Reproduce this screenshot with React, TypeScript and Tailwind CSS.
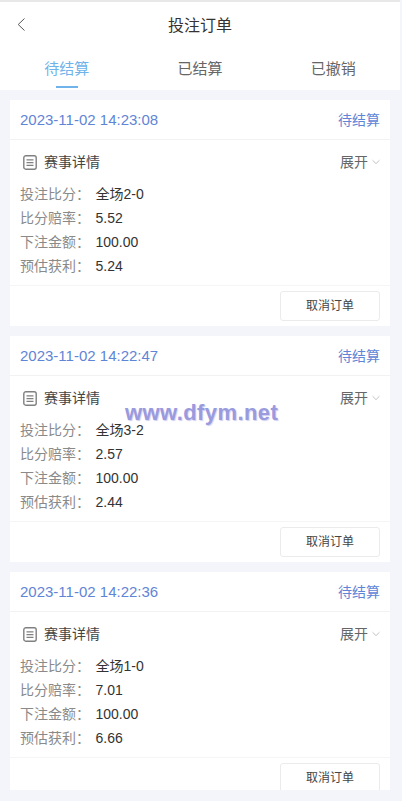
const orders = [
  { time: "2023-11-02 14:23:08", score: "全场2-0", odds: "5.52", amount: "100.00", profit: "5.24" },
  { time: "2023-11-02 14:22:47", score: "全场3-2", odds: "2.57", amount: "100.00", profit: "2.44" },
  { time: "2023-11-02 14:22:36", score: "全场1-0", odds: "7.01", amount: "100.00", profit: "6.66" },
];

const tabs = ["待结算", "已结算", "已撤销"];

function OrderRow({ label, value }: { label: string; value: string }) {
  return (
    <div className="flex h-6 items-center text-[14px]">
      <span className="w-[75.5px] text-[#8a8a8a]">{label}：</span>
      <span className="text-[#333333]">{value}</span>
    </div>
  );
}

function OrderCard({ order }: { order: (typeof orders)[number] }) {
  return (
    <div className="mb-2.5 shrink-0 bg-white">
      <div className="flex h-10 items-center justify-between border-b border-[#f2f2f2] px-2.5 pt-[2px]">
        <span className="text-[15px] text-[#5f85d6]">{order.time}</span>
        <span className="text-[14px] text-[#5f85d6]">待结算</span>
      </div>
      <div className="flex h-[42px] items-center justify-between pl-[13px] pr-2.5 pt-0.5">
        <div className="flex items-center gap-[7px] text-[14px] text-[#444444]">
          <svg width="14" height="15" viewBox="0 0 14 15" fill="none" stroke="#808080" strokeWidth="1.4">
            <rect x="0.8" y="0.8" width="12.4" height="13.4" rx="2" />
            <path d="M3.5 4.8h7M3.5 7.6h7M3.5 10.4h7" strokeWidth="1.2" />
          </svg>
          <span>赛事详情</span>
        </div>
        <div className="flex items-center gap-[4px] text-[14px] text-[#666666]">
          <span>展开</span>
          <svg width="8" height="6" viewBox="0 0 8 6" fill="none" stroke="#c4c4c4" strokeWidth="1">
            <path d="M0.5 1.2 4 4.6 7.5 1.2" />
          </svg>
        </div>
      </div>
      <div className="px-2.5 pb-[7px]">
        <OrderRow label="投注比分" value={order.score} />
        <OrderRow label="比分赔率" value={order.odds} />
        <OrderRow label="下注金额" value={order.amount} />
        <OrderRow label="预估获利" value={order.profit} />
      </div>
      <div className="flex h-[41px] items-center justify-end border-t border-[#f5f5f5] px-2.5">
        <button
          type="button"
          className="flex h-[30px] w-[100px] items-center justify-center rounded-[3px] border border-[#ebebeb] bg-white text-[12px] text-[#444444]"
        >
          取消订单
        </button>
      </div>
    </div>
  );
}

export default function App() {
  return (
    <div
      className="relative h-[801px] w-[402px] overflow-hidden bg-[#f3f5fa]"
      style={{ fontFamily: '"Liberation Sans", "Noto Sans CJK SC", sans-serif' }}
    >
      <div className="h-[790px] w-[400px] overflow-hidden">
        <div className="border-t-2 border-[#e8e8e8] bg-white">
          <div className="relative flex h-[46px] items-center justify-center pt-[2px] text-[16px] text-[#333333]">
            <svg className="absolute left-[17px] top-[16px]" width="8" height="13" viewBox="0 0 8 13" fill="none" stroke="#555555" strokeWidth="1">
              <path d="M7.5 0.5 1.2 6.5 7.5 12.5" />
            </svg>
            投注订单
          </div>
          <div className="flex h-[42px]">
            {tabs.map((tab, i) => (
              <div
                key={tab}
                className={`relative flex flex-1 items-center justify-center text-[15px] ${
                  i === 0 ? "text-[#6fb3ea]" : "text-[#666666]"
                }`}
              >
                {tab}
                {i === 0 && (
                  <span className="absolute bottom-[2px] left-1/2 h-[2px] w-[22px] -translate-x-1/2 bg-[#6fb3ea]" />
                )}
              </div>
            ))}
          </div>
        </div>
        <div className="flex flex-col px-2.5 pt-2.5">
          {orders.map((order) => (
            <OrderCard key={order.time} order={order} />
          ))}
        </div>
      </div>
      <div className="absolute left-[125px] top-[401px] text-[22px] leading-6 font-bold tracking-[0.4px] text-[#9a9ade] [text-shadow:1px_1px_1px_#d0d0f0]">
        www.dfym.net
      </div>
    </div>
  );
}
